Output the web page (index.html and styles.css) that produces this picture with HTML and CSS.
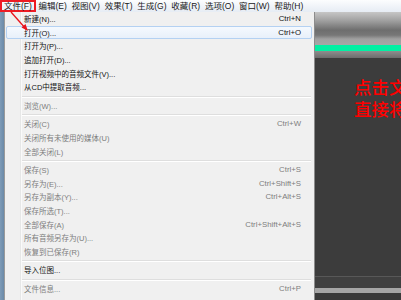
FILE: index.html
```html
<!DOCTYPE html>
<html lang="zh-CN">
<head>
<meta charset="utf-8">
<link rel="stylesheet" href="styles.css">
</head>
<body>
<div class="screen">
  <div class="menubar">
    <span class="mb-item active">文件(F)</span>
    <span class="mb-item">编辑(E)</span>
    <span class="mb-item">视图(V)</span>
    <span class="mb-item">效果(T)</span>
    <span class="mb-item">生成(G)</span>
    <span class="mb-item">收藏(R)</span>
    <span class="mb-item">选项(O)</span>
    <span class="mb-item">窗口(W)</span>
    <span class="mb-item">帮助(H)</span>
  </div>
  <div class="main">
    <div class="frame"></div>
    <div class="menu">
      <div class="mi"><span>新建(N)...</span><span class="sc">Ctrl+N</span></div>
      <div class="mi hover"><span>打开(O)...</span><span class="sc">Ctrl+O</span></div>
      <div class="mi"><span>打开为(P)...</span></div>
      <div class="mi"><span>追加打开(D)...</span></div>
      <div class="mi"><span>打开视频中的音频文件(V)...</span></div>
      <div class="mi"><span>从CD中提取音频...</span></div>
      <div class="sep"></div>
      <div class="mi off"><span>浏览(W)...</span></div>
      <div class="sep"></div>
      <div class="mi off"><span>关闭(C)</span><span class="sc">Ctrl+W</span></div>
      <div class="mi off"><span>关闭所有未使用的媒体(U)</span></div>
      <div class="mi off"><span>全部关闭(L)</span></div>
      <div class="sep"></div>
      <div class="mi off"><span>保存(S)</span><span class="sc">Ctrl+S</span></div>
      <div class="mi off"><span>另存为(E)...</span><span class="sc">Ctrl+Shift+S</span></div>
      <div class="mi off"><span>另存为副本(Y)...</span><span class="sc">Ctrl+Alt+S</span></div>
      <div class="mi off"><span>保存所选(T)...</span></div>
      <div class="mi off"><span>全部保存(A)</span><span class="sc">Ctrl+Shift+Alt+S</span></div>
      <div class="mi off"><span>所有音频另存为(U)...</span></div>
      <div class="mi off"><span>恢复到已保存(R)</span></div>
      <div class="sep"></div>
      <div class="mi"><span>导入位图...</span></div>
      <div class="sep"></div>
      <div class="mi off"><span>文件信息...</span><span class="sc">Ctrl+P</span></div>
    </div>
    <div class="stage">
      <div class="toolbar"></div>
      <div class="green"></div>
      <div class="strip"></div>
      <div class="canvas">
        <p class="note"><span class="ln">点击文</span><span class="ln">直接将</span></p>
      </div>
      <div class="line"></div>
      <div class="band"></div>
      <div class="light"></div>
      <div class="tail"></div>
    </div>
  </div>
  <svg class="arrow" width="40" height="40" viewBox="0 0 40 40">
    <line x1="11" y1="12" x2="26" y2="29" stroke="#e8141c" stroke-width="1.3"/>
    <path d="M28 31 L21.5 27.5 L25.5 24 Z" fill="#e8141c"/>
  </svg>
</div>
</body>
</html>
```

FILE: styles.css
```css
* { box-sizing: border-box; }
html, body { margin: 0; padding: 0; }
body { width: 401px; height: 300px; overflow: hidden; background: #3c3c3c; }

.screen {
  position: relative;
  width: 401px;
  height: 300px;
  overflow: hidden;
  display: flex;
  flex-direction: column;
  font-family: "Liberation Sans", "Noto Sans CJK SC", sans-serif;
  font-size: 7.5px;
  color: #111;
}

.menubar {
  height: 12px;
  flex: none;
  display: flex;
  align-items: stretch;
  background: linear-gradient(#fcfdfe, #e6ecf4);
  font-size: 8.5px;
}
.mb-item {
  display: flex;
  align-items: center;
  padding: 0 2.4px;
  line-height: 12px;
  white-space: nowrap;
  color: #1a1a1a;
}
.mb-item.active {
  border: 2px solid #ee1c24;
  padding: 0 1px 0 2px;
  width: 36px;
}

.main {
  flex: 1;
  display: flex;
  min-height: 0;
}

.frame {
  width: 4px;
  flex: none;
  background: linear-gradient(90deg, #7e9bb7, #6b8aa8);
}

.menu {
  width: 311px;
  flex: none;
  border-left: 1px solid #9a9a9a;
  border-right: 1px solid #8c8c8c;
  position: relative;
  padding: 0 2px 0 1px;
  background-image: linear-gradient(90deg, transparent 15px, #e6e7e7 15px, #e6e7e7 16px, #fafafa 16px, #fafafa 17px, transparent 17px);
  background-color: #f0f0f0;
}

.mi {
  height: 13.6px;
  display: flex;
  align-items: center;
  justify-content: space-between;
  padding: 0 10px 0 17px;
  white-space: nowrap;
  border: 1px solid transparent;
  border-radius: 2px;
}
.mi.hover {
  border-color: #b4d1f2;
  background: linear-gradient(#f5f9fe, #e8f0fa);
}
.mi.off { color: #7d7d7d; }
.sc { font-size: 7.8px; }

.sep {
  height: 5px;
  margin-left: 16px;
  margin-right: 1px;
  background: linear-gradient(transparent 2px, #dedede 2px, #dedede 3px, #fff 3px, #fff 4px, transparent 4px);
}

.stage {
  flex: 1;
  display: flex;
  flex-direction: column;
  min-width: 0;
  background: #3c3c3c;
}
.toolbar {
  height: 33px;
  flex: none;
  background: linear-gradient(#c6c6c6 0%, #a2a2a2 25%, #6e6e6e 55%, #777 70%, #a0a0a0 82%, #a6a6a6 100%);
}
.green { height: 6px; flex: none; background: #02efa3; }
.strip {
  height: 7px;
  flex: none;
  background: linear-gradient(#8e8e8e, #6c6c6c);
}
.canvas {
  flex: 1;
  background: #3c3c3c;
  overflow: hidden;
}
.note {
  margin: 18px 0 0 39px;
  display: flex;
  flex-direction: column;
  font-family: "Noto Sans CJK SC", serif;
  font-size: 17.5px;
  font-weight: 500;
  line-height: 22px;
  color: #ff0000;
  white-space: nowrap;
}
.ln { display: block; height: 22px; }
.line { height: 1px; flex: none; background: #585858; }
.band { height: 11px; flex: none; background: #404040; }
.light { height: 5px; flex: none; background: #a6a6a6; }
.tail { height: 7px; flex: none; background: #3a3a3a; }

.arrow {
  position: absolute;
  left: 0;
  top: 0;
}
```
